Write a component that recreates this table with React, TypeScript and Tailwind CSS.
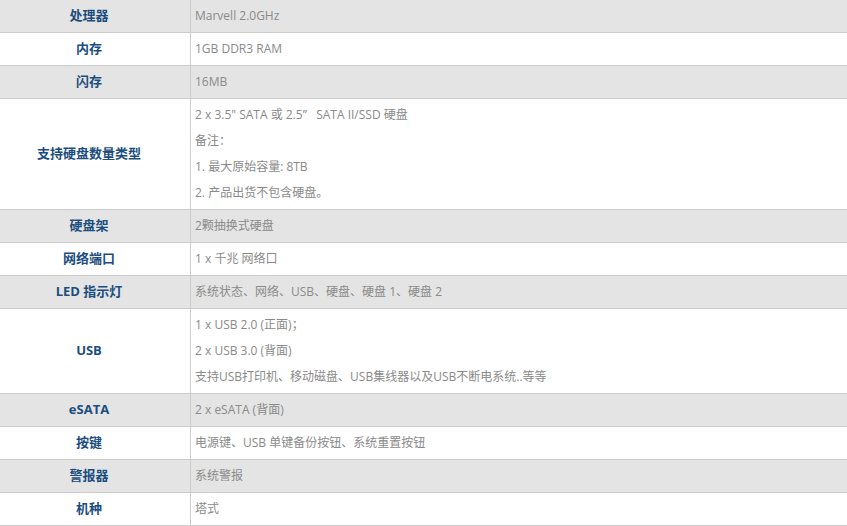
import React from "react";

const rows: { label: string; lines: string[]; gray: boolean }[] = [
  { label: "处理器", lines: ["Marvell 2.0GHz"], gray: true },
  { label: "内存", lines: ["1GB DDR3 RAM"], gray: false },
  { label: "闪存", lines: ["16MB"], gray: true },
  {
    label: "支持硬盘数量类型",
    lines: [
      "2 x 3.5\" SATA 或 2.5”\u00a0\u00a0 SATA II/SSD 硬盘",
      "备注：",
      "1. 最大原始容量: 8TB",
      "2. 产品出货不包含硬盘。",
    ],
    gray: false,
  },
  { label: "硬盘架", lines: ["2颗抽换式硬盘"], gray: true },
  { label: "网络端口", lines: ["1 x 千兆 网络口"], gray: false },
  { label: "LED 指示灯", lines: ["系统状态、网络、USB、硬盘、硬盘 1、硬盘 2"], gray: true },
  {
    label: "USB",
    lines: ["1 x USB 2.0 (正面)；", "2 x USB 3.0 (背面)", "支持USB打印机、移动磁盘、USB集线器以及USB不断电系统..等等"],
    gray: false,
  },
  { label: "eSATA", lines: ["2 x eSATA (背面)"], gray: true },
  { label: "按键", lines: ["电源键、USB 单键备份按钮、系统重置按钮"], gray: false },
  { label: "警报器", lines: ["系统警报"], gray: true },
  { label: "机种", lines: ["塔式"], gray: false },
];

export default function App() {
  return (
    <div
      className="w-[847px] bg-white text-[12px]"
      style={{ fontFamily: '"Open Sans", "Noto Sans CJK SC", sans-serif' }}
    >
      {rows.map((r, i) => (
        <div
          key={i}
          className={`flex border-b border-[#cccccc] ${r.gray ? "bg-[#e4e4e4]" : "bg-white"}`}
        >
          <div className="w-[191px] shrink-0 flex items-center justify-center pr-[12px] text-[13px] font-bold text-[#1b4d7e] border-r border-[#cccccc]">
            {r.label}
          </div>
          <div className="flex-1 py-[3px] pl-[4px] text-[#8a8a8a]">
            {r.lines.map((l, j) => (
              <div key={j} className="leading-[26px] whitespace-pre">
                {l}
              </div>
            ))}
          </div>
        </div>
      ))}
    </div>
  );
}
